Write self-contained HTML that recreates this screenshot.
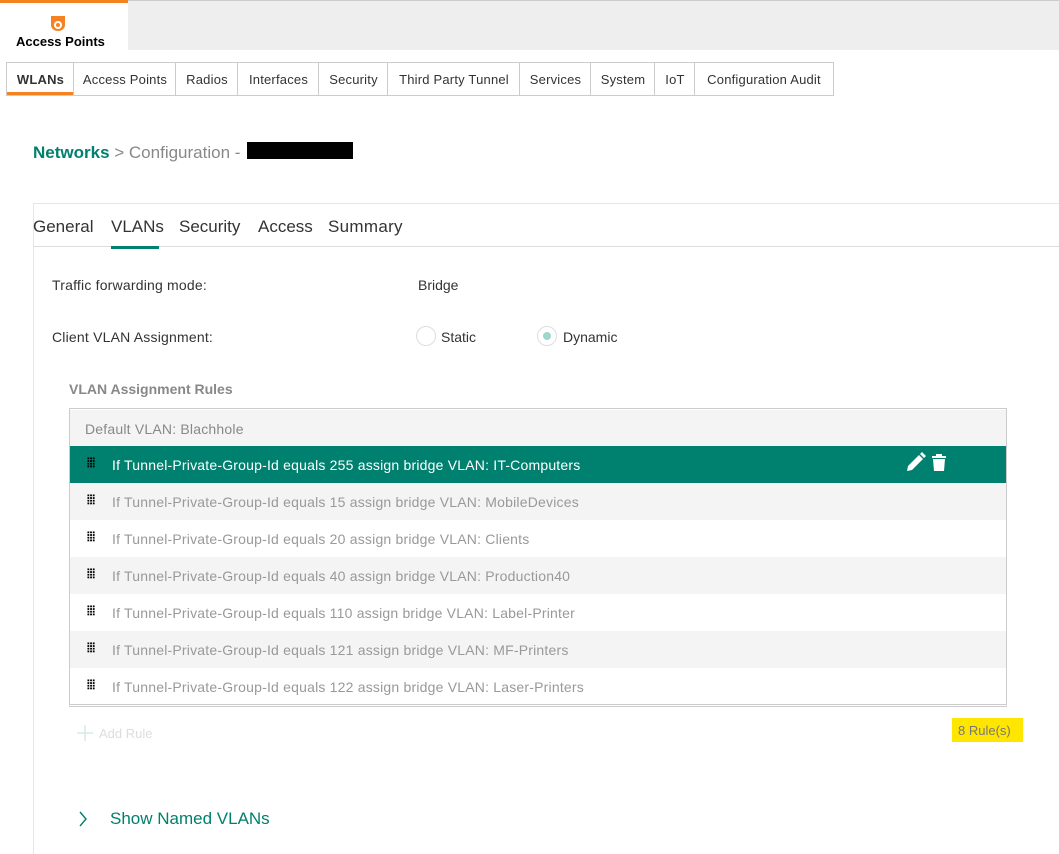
<!DOCTYPE html>
<html><head><style>
*{box-sizing:border-box;margin:0;padding:0}
body{width:1059px;height:854px;background:#fff;font-family:"Liberation Sans",sans-serif;position:relative;overflow:hidden;color:#333}
.abs{position:absolute}
.topbar{left:128px;top:0;width:931px;height:50px;background:#eeeeee;border-top:1px solid #ccc}
.aptab{left:0;top:0;width:128px;height:50px;border-top:3px solid #f58220;background:#fff}
.nav{left:6px;top:62px;width:828px;height:34px;border:1px solid #ccc}
.nav div{position:absolute;top:0;height:32px;line-height:33px;text-align:center;font-size:13px;color:#333;border-left:1px solid #ccc;letter-spacing:0.2px}
.row{position:absolute;left:70px;width:936px;height:37px;line-height:39px;font-size:14px;color:#999;padding-left:42px;letter-spacing:0.2px}
.dots{position:absolute;left:17px;top:11px;width:8px;height:11px;background-image:radial-gradient(#000 55%,transparent 60%);background-size:2.7px 2.7px}
</style></head><body>
<div class="abs topbar"></div>
<div class="abs aptab">
<svg class="abs" style="left:49px;top:12px" width="18" height="17" viewBox="0 0 18 17"><path d="M2 1v9a7 6 0 0 0 14 0V1" fill="#f58220"/><circle cx="9" cy="10" r="4" fill="#fff"/><circle cx="9" cy="10" r="2" fill="#f58220"/></svg>
<div class="abs" style="left:16px;top:31px;font-size:13px;font-weight:bold;color:#000">Access Points</div>
</div>
<div class="abs nav">
<div style="left:0;width:67px;border-left:none;font-weight:bold;border-bottom:3px solid #f58220">WLANs</div>
<div style="left:66px;width:103px">Access Points</div>
<div style="left:168px;width:63px">Radios</div>
<div style="left:230px;width:82px">Interfaces</div>
<div style="left:311px;width:70px">Security</div>
<div style="left:380px;width:133px">Third Party Tunnel</div>
<div style="left:512px;width:72px">Services</div>
<div style="left:583px;width:65px">System</div>
<div style="left:647px;width:41px">IoT</div>
<div style="left:687px;width:139px">Configuration Audit</div>
</div>

<div class="abs" style="left:33px;top:143px;font-size:17px;color:#888"><span style="color:#00806e;font-weight:bold">Networks</span> &gt; Configuration - </div>
<div class="abs" style="left:247px;top:142px;width:106px;height:17px;background:#000"></div>

<div class="abs" style="left:33px;top:203px;width:1026px;height:651px;border-left:1px solid #e6e6e6;border-top:1px solid #e6e6e6"></div>
<div class="abs" style="left:33px;top:246px;width:1026px;height:1px;background:#ddd"></div>
<div class="abs" style="left:33px;top:217px;font-size:17px;color:#333">General</div>
<div class="abs" style="left:111px;top:217px;font-size:17px;color:#333">VLANs</div>
<div class="abs" style="left:111px;top:246px;width:48px;height:3px;background:#00806e"></div>
<div class="abs" style="left:179px;top:217px;font-size:17px;color:#333">Security</div>
<div class="abs" style="left:258px;top:217px;font-size:17px;color:#333">Access</div>
<div class="abs" style="left:328px;top:217px;font-size:17px;color:#333;letter-spacing:0.3px">Summary</div>

<div class="abs" style="left:52px;top:277px;font-size:14px;letter-spacing:0.2px">Traffic forwarding mode:</div>
<div class="abs" style="left:418px;top:277px;font-size:14px">Bridge</div>
<div class="abs" style="left:52px;top:329px;font-size:14px;letter-spacing:0.2px">Client VLAN Assignment:</div>
<div class="abs" style="left:416px;top:326px;width:20px;height:20px;border:1px solid #ddd;border-radius:50%"></div>
<div class="abs" style="left:441px;top:329px;font-size:14px">Static</div>
<div class="abs" style="left:537px;top:326px;width:20px;height:20px;border:1px solid #ddd;border-radius:50%"><div class="abs" style="left:5px;top:5px;width:8px;height:8px;border-radius:50%;background:#9fd6cc"></div></div>
<div class="abs" style="left:563px;top:329px;font-size:14px">Dynamic</div>
<div class="abs" style="left:69px;top:381px;font-size:14px;font-weight:bold;color:#888">VLAN Assignment Rules</div>

<div class="abs" style="left:69px;top:408px;width:938px;height:299px;border:1px solid #ccc;border-bottom:3px double #ccc"></div>
<div class="row" style="top:410px;background:#f4f4f4;padding-left:15px;color:#888">Default VLAN: Blachhole</div>
<div class="row" style="top:446px;background:#00806e;color:#fff"><span class="dots" style="background-image:radial-gradient(#000 55%,transparent 60%)"></span>If Tunnel-Private-Group-Id equals 255 assign bridge VLAN: IT-Computers
<svg class="abs" style="left:836px;top:6px" width="42" height="20" viewBox="0 0 42 20"><path d="M1 19l1-5L13 3l4 4L6 18z M14 2l2-2 4 4-2 2z" fill="#fff"/><path d="M26 4h14v2H26z M30 2h6v2h-6z M27 7h12l-1 12h-10z" fill="#fff"/></svg></div>
<div class="row" style="top:483px;background:#f4f4f4"><span class="dots"></span>If Tunnel-Private-Group-Id equals 15 assign bridge VLAN: MobileDevices</div>
<div class="row" style="top:520px;background:#fff"><span class="dots"></span>If Tunnel-Private-Group-Id equals 20 assign bridge VLAN: Clients</div>
<div class="row" style="top:557px;background:#f4f4f4"><span class="dots"></span>If Tunnel-Private-Group-Id equals 40 assign bridge VLAN: Production40</div>
<div class="row" style="top:594px;background:#fff"><span class="dots"></span>If Tunnel-Private-Group-Id equals 110 assign bridge VLAN: Label-Printer</div>
<div class="row" style="top:631px;background:#f4f4f4"><span class="dots"></span>If Tunnel-Private-Group-Id equals 121 assign bridge VLAN: MF-Printers</div>
<div class="row" style="top:668px;background:#fff;height:36px"><span class="dots"></span>If Tunnel-Private-Group-Id equals 122 assign bridge VLAN: Laser-Printers</div>

<svg class="abs" style="left:77px;top:725px" width="16" height="16"><path d="M8 0v16M0 8h16" stroke="#cde6e2" stroke-width="1.2"/></svg>
<div class="abs" style="left:99px;top:726px;font-size:13px;color:#ddd">Add Rule</div>
<div class="abs" style="left:952px;top:718px;width:71px;height:24px;background:#ffe600;font-size:13px;line-height:25px;padding-left:6px;color:#777">8 Rule(s)</div>

<svg class="abs" style="left:78px;top:811px" width="10" height="16"><path d="M2 1l6 7-6 7" stroke="#00806e" stroke-width="1.4" fill="none"/></svg>
<div class="abs" style="left:110px;top:809px;font-size:17px;color:#00806e">Show Named VLANs</div>
</body></html>
